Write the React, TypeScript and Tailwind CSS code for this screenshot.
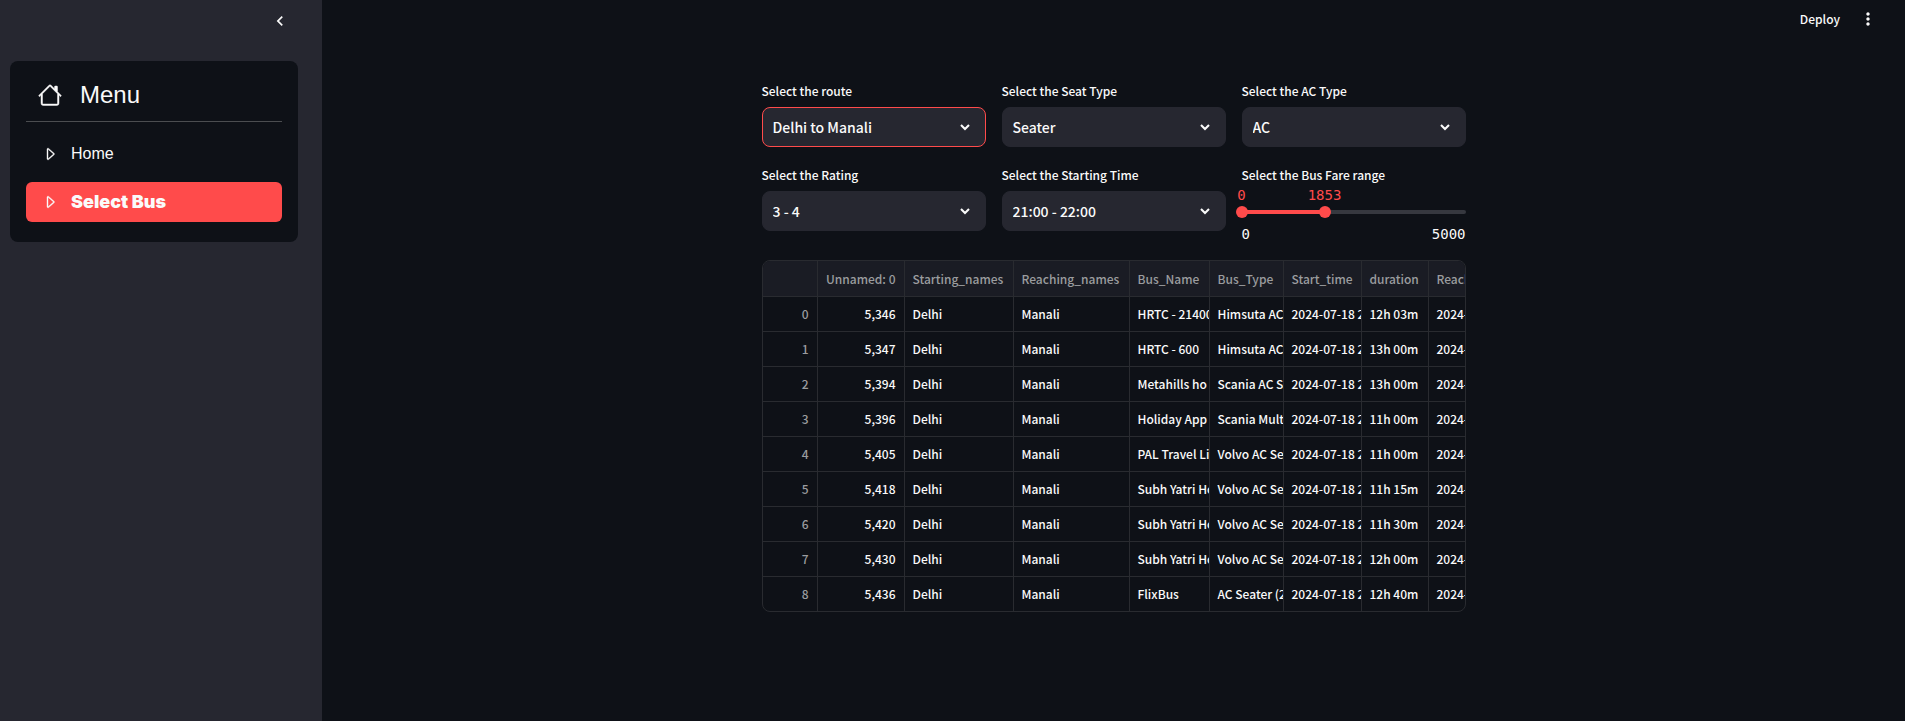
import { useState } from "react";
import { BsCaretRight, BsHouse } from "react-icons/bs";
import { MdMoreVert, MdOutlineChevronLeft } from "react-icons/md";

const selects = [
  { id: "route", label: "Select the route", value: "Delhi to Manali", active: true },
  { id: "seat", label: "Select the Seat Type", value: "Seater" },
  { id: "ac", label: "Select the AC Type", value: "AC" },
  { id: "rating", label: "Select the Rating", value: "3 - 4" },
  { id: "start", label: "Select the Starting Time", value: "21:00 - 22:00" },
];

const columns = [
  { name: "", width: "w-[55px]" },
  { name: "Unnamed: 0", width: "w-[87px]" },
  { name: "Starting_names", width: "w-[109px]" },
  { name: "Reaching_names", width: "w-[116px]" },
  { name: "Bus_Name", width: "w-20" },
  { name: "Bus_Type", width: "w-[74px]" },
  { name: "Start_time", width: "w-[78px]" },
  { name: "duration", width: "w-[67px]" },
  { name: "Reach", width: "w-[38px]" },
];

const rows = [
  ["5,346", "HRTC - 21400", "Himsuta AC", "12h 03m"],
  ["5,347", "HRTC - 600", "Himsuta AC", "13h 00m"],
  ["5,394", "Metahills ho", "Scania AC S", "13h 00m"],
  ["5,396", "Holiday App", "Scania Mult", "11h 00m"],
  ["5,405", "PAL Travel Li", "Volvo AC Se", "11h 00m"],
  ["5,418", "Subh Yatri Ho", "Volvo AC Se", "11h 15m"],
  ["5,420", "Subh Yatri Ho", "Volvo AC Se", "11h 30m"],
  ["5,430", "Subh Yatri Ho", "Volvo AC Se", "12h 00m"],
  ["5,436", "FlixBus", "AC Seater (2", "12h 40m"],
];

function Sidebar() {
  return (
    <aside className="w-[322px] shrink-0 bg-[#262730]">
      <div className="flex h-[61px] justify-end px-8 pt-[11px]">
        <button type="button" aria-label="Collapse sidebar" className="flex size-5 items-center justify-center">
          <MdOutlineChevronLeft className="size-5" />
        </button>
      </div>
      <nav className="mr-6 ml-[10px] rounded-lg bg-[#0e1117] px-4 pt-4 pb-5 font-['Liberation_Sans',Arial,sans-serif]">
        <div className="flex h-9 items-center gap-[18px] px-3 text-2xl">
          <BsHouse className="size-6" strokeWidth={0.3} />
          <span>Menu</span>
        </div>
        <hr className="mt-2 mb-3 border-[#4b4d50]" />
        <a href="#home" className="flex h-10 items-center gap-[13px] px-4 text-base">
          <BsCaretRight className="size-4" strokeWidth={0.4} />
          <span>Home</span>
        </a>
        <a href="#select-bus" className="mt-2 flex h-10 items-center gap-[13px] rounded-md bg-[#ff4b4b] px-4 text-lg">
          <BsCaretRight className="size-4" strokeWidth={0.4} />
          <span className="font-['Inter',sans-serif] font-black">Select Bus</span>
        </a>
      </nav>
    </aside>
  );
}

function SelectField({ id, label, value, active }: { id: string; label: string; value: string; active?: boolean }) {
  return (
    <div>
      <label htmlFor={id} className="mb-1 flex h-6 items-center text-xs">
        {label}
      </label>
      <div className="relative">
        <select
          id={id}
          className={
            "h-10 w-full appearance-none rounded-lg border bg-[#262730] pr-9 pl-[10px] text-sm font-medium outline-none " +
            (active ? "border-[#ff4b4b]" : "border-[#262730]")
          }
        >
          <option>{value}</option>
        </select>
        <svg viewBox="0 0 10 7" fill="none" className="pointer-events-none absolute top-[17px] right-4 h-[7px] w-[10px]">
          <path d="M1 1 5 5 9 1" stroke="currentColor" strokeWidth="2.1" />
        </svg>
      </div>
    </div>
  );
}

function FareSlider() {
  const max = 5000;
  const [low, setLow] = useState(0);
  const [high, setHigh] = useState(1853);
  const lowPct = (low / max) * 100;
  const highPct = (high / max) * 100;
  const range = "pointer-events-none absolute inset-0 h-full w-full opacity-0";
  return (
    <fieldset>
      <legend className="flex h-6 items-center text-xs">Select the Bus Fare range</legend>
      <div className="relative h-[23px] font-['DejaVu_Sans_Mono',monospace] text-sm leading-4 font-normal text-[#ff4b4b]">
        <span className="absolute -translate-x-1/2" style={{ left: `${lowPct}%` }}>{low}</span>
        <span className="absolute -translate-x-1/2" style={{ left: `${highPct}%` }}>{high}</span>
      </div>
      <div className="relative flex h-1 items-center rounded-sm bg-[#36383f]">
        <div className="absolute h-1 bg-[#ff4b4b]" style={{ left: `${lowPct}%`, width: `${highPct - lowPct}%` }} />
        <span className="absolute size-3 -translate-x-1/2 rounded-full bg-[#ff4b4b]" style={{ left: `${lowPct}%` }} />
        <span className="absolute size-3 -translate-x-1/2 rounded-full bg-[#ff4b4b]" style={{ left: `${highPct}%` }} />
        <input type="range" aria-label="Minimum fare" min={0} max={max} value={low} onChange={(e) => setLow(Math.min(+e.target.value, high))} className={range} />
        <input type="range" aria-label="Maximum fare" min={0} max={max} value={high} onChange={(e) => setHigh(Math.max(+e.target.value, low))} className={range} />
      </div>
      <div className="flex justify-between pt-3 font-['DejaVu_Sans_Mono',monospace] text-sm leading-4 font-normal">
        <span>0</span>
        <span>5000</span>
      </div>
    </fieldset>
  );
}

function BusTable() {
  const line = "border-r border-b border-[#292b30] overflow-hidden whitespace-nowrap";
  const cell = line + " px-2";
  const clipped = line + " pl-2";
  return (
    <div className="mt-[18px] overflow-hidden rounded-lg border border-[#292b30]">
      <table className="-mb-px w-[704px] table-fixed border-separate border-spacing-0 text-xs">
        <thead>
          <tr className="h-9 bg-[#1a1c24] text-[#9b9c9f]">
            {columns.map((c, i) => (
              <th key={c.name} scope="col" className={`${i === 8 ? clipped : cell} ${c.width} font-medium ${i === 1 ? "text-right" : "text-left"}`}>
                {c.name}
              </th>
            ))}
          </tr>
        </thead>
        <tbody>
          {rows.map(([num, name, type, duration], i) => (
            <tr key={num} className="h-[35px]">
              <th scope="row" className={cell + " text-right font-medium text-[#9b9c9f]"}>{i}</th>
              <td className={cell + " text-right"}>{num}</td>
              <td className={cell}>Delhi</td>
              <td className={cell}>Manali</td>
              <td className={clipped}>{name}</td>
              <td className={clipped}>{type}</td>
              <td className={clipped}>2024-07-18 2</td>
              <td className={cell}>{duration}</td>
              <td className={clipped}>2024-</td>
            </tr>
          ))}
        </tbody>
      </table>
    </div>
  );
}

export default function App() {
  return (
    <div className="flex min-h-screen bg-[#0e1117] font-['Noto_Sans_CJK_SC',sans-serif] font-medium text-[#fafafa]">
      <Sidebar />
      <div className="min-w-0 flex-1">
        <header className="flex h-[38px] items-center justify-end gap-[18px] pr-[27px]">
          <button type="button" className="text-xs">Deploy</button>
          <button type="button" aria-label="Main menu" className="flex size-5 items-center justify-center">
            <MdMoreVert className="size-5" />
          </button>
        </header>
        <main className="mx-auto max-w-[736px] px-4 pt-[41px]">
          <div className="grid grid-cols-3 gap-4">
            {selects.map((s) => (
              <SelectField key={s.id} {...s} />
            ))}
            <FareSlider />
          </div>
          <BusTable />
        </main>
      </div>
    </div>
  );
}
